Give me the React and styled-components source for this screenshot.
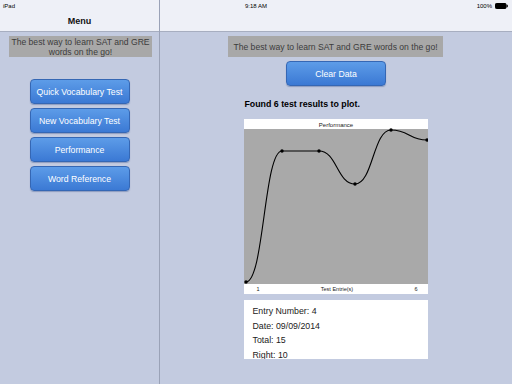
import React from 'react';
import styled, { createGlobalStyle } from 'styled-components';

const GlobalStyle = createGlobalStyle`
html, body {
    margin: 0;
    padding: 0;
}
body {
    font-family: "Liberation Sans", Arial, Helvetica, sans-serif;
    background: #c3cbe0;
}
`;

const Screen = styled.div`
position: relative;
display: grid;
grid-template-columns: 160px 1fr;
width: 512px;
height: 384px;
overflow: hidden;
background: #c3cbe0;
`;

const StatusBar = styled.div`
position: absolute;
top: 0;
left: 0;
right: 0;
height: 11px;
display: flex;
align-items: center;
justify-content: space-between;
padding: 0 4px 0 3px;
font-size: 6px;
color: #000;
`;

const Clock = styled.span`
position: absolute;
left: 0;
right: 0;
text-align: center;
`;

const Battery = styled.span`
display: flex;
align-items: center;
gap: 3px;
`;

const Pane = styled.div`
display: flex;
flex-direction: column;
border-right: ${p => (p.$divider ? '1px solid #9aa2b7' : 'none')};
`;

const NavBar = styled.div`
height: 32px;
box-sizing: border-box;
padding-top: 11px;
background: #eef0f7;
border-bottom: 1px solid #a7aec0;
display: flex;
align-items: center;
justify-content: center;
font-size: 9px;
font-weight: bold;
color: #111;
`;

const Content = styled.div`
display: flex;
flex-direction: column;
align-items: center;
padding-top: 4px;
`;

const Tagline = styled.div`
width: ${p => p.$width}px;
box-sizing: border-box;
padding: 0.5px 0;
background: #a8a8a8;
color: #3c3c3c;
font-size: 8.6px;
line-height: 10px;
text-align: center;
min-height: 21px;
display: flex;
align-items: center;
justify-content: center;
margin-left: ${p => p.$shift || 0}px;
`;

const ButtonStack = styled.div`
display: flex;
flex-direction: column;
gap: 4px;
margin-top: ${p => p.$top}px;
`;

const BlueButton = styled.button`
width: 100px;
height: 25px;
box-sizing: border-box;
border: 1px solid #3567b4;
border-radius: 4px;
background: linear-gradient(#5d9ce8, #3b79d4);
box-shadow: 0 1px 1px rgba(40, 70, 130, 0.35);
color: #fff;
font-family: "Liberation Sans", Arial, sans-serif;
font-size: 8.7px;
padding: 0;
cursor: pointer;
`;

const Column = styled.div`
width: 184px;
display: flex;
flex-direction: column;
margin-left: -1px;
`;

const Found = styled.div`
font-size: 8.8px;
font-weight: bold;
color: #000;
padding-left: 1px;
margin: 7px 0 4px;
height: 22px;
display: flex;
align-items: center;
`;

const Chart = styled.svg`
display: block;
width: 184px;
height: 175px;
background: #fff;
`;

const InfoCard = styled.div`
margin-top: 6px;
height: 59px;
overflow: hidden;
background: #fff;
box-sizing: border-box;
padding: 4px 9px 0;
font-size: 8.8px;
line-height: 14.7px;
color: #222;
`;

const points = [
    [2, 163],
    [38, 32],
    [75, 32],
    [111, 65],
    [147, 11],
    [183, 21],
];

const curve = () => {
    let d = `M${points[0][0]} ${points[0][1]}`;
    for (let i = 1; i < points.length; i++) {
        const [x0, y0] = points[i - 1];
        const [x1, y1] = points[i];
        const h = (x1 - x0) / 2;
        d += ` C${x0 + h} ${y0} ${x1 - h} ${y1} ${x1} ${y1}`;
    }
    return d;
};

const BatteryIcon = () => (
    <svg width="13" height="6" viewBox="0 0 13 6">
        <rect x="0.5" y="0.5" width="10.5" height="5" rx="0.8" fill="#000" stroke="#000" strokeWidth="1" />
        <rect x="11.5" y="1.8" width="1.3" height="2.4" fill="#000" />
    </svg>
);

const PerformanceChart = () => (
    <Chart viewBox="0 0 184 175">
        <text x="92" y="7.5" fontSize="6" textAnchor="middle" fill="#222" fontFamily="Liberation Sans, Arial, sans-serif">Performance</text>
        <rect x="0" y="10" width="184" height="155" fill="#a9a9a9" />
        <path d={curve()} fill="none" stroke="#000" strokeWidth="1.1" />
        {points.map(([x, y], i) => (
            <circle key={i} cx={x} cy={y} r="1.7" fill="#000" />
        ))}
        <g fontSize="5.5" fill="#222" fontFamily="Liberation Sans, Arial, sans-serif" textAnchor="middle">
            <text x="14" y="171.5">1</text>
            <text x="93" y="171.5">Test Entrie(s)</text>
            <text x="172" y="171.5">6</text>
        </g>
    </Chart>
);

const menu = ['Quick Vocabulary Test', 'New Vocabulary Test', 'Performance', 'Word Reference'];

const App = () => {
    return (
        <>
            <GlobalStyle />
            <Screen>
                <Pane $divider>
                    <NavBar>Menu</NavBar>
                    <Content>
                        <Tagline $width={143} $shift={2}>
                            The best way to learn SAT and GRE words on the go!
                        </Tagline>
                        <ButtonStack $top={22}>
                            {menu.map(m => (
                                <BlueButton key={m}>{m}</BlueButton>
                            ))}
                        </ButtonStack>
                    </Content>
                </Pane>
                <Pane>
                    <NavBar />
                    <Content>
                        <Tagline $width={215} $shift={-1}>
                            The best way to learn SAT and GRE words on the go!
                        </Tagline>
                        <ButtonStack $top={4}>
                            <BlueButton>Clear Data</BlueButton>
                        </ButtonStack>
                        <Column>
                            <Found>Found 6 test results to plot.</Found>
                            <PerformanceChart />
                            <InfoCard>
                                <div>Entry Number: 4</div>
                                <div>Date: 09/09/2014</div>
                                <div>Total: 15</div>
                                <div>Right: 10</div>
                            </InfoCard>
                        </Column>
                    </Content>
                </Pane>
                <StatusBar>
                    <span>iPad</span>
                    <Clock>9:18 AM</Clock>
                    <Battery>
                        100%
                        <BatteryIcon />
                    </Battery>
                </StatusBar>
            </Screen>
        </>
    );
};

export default App;
